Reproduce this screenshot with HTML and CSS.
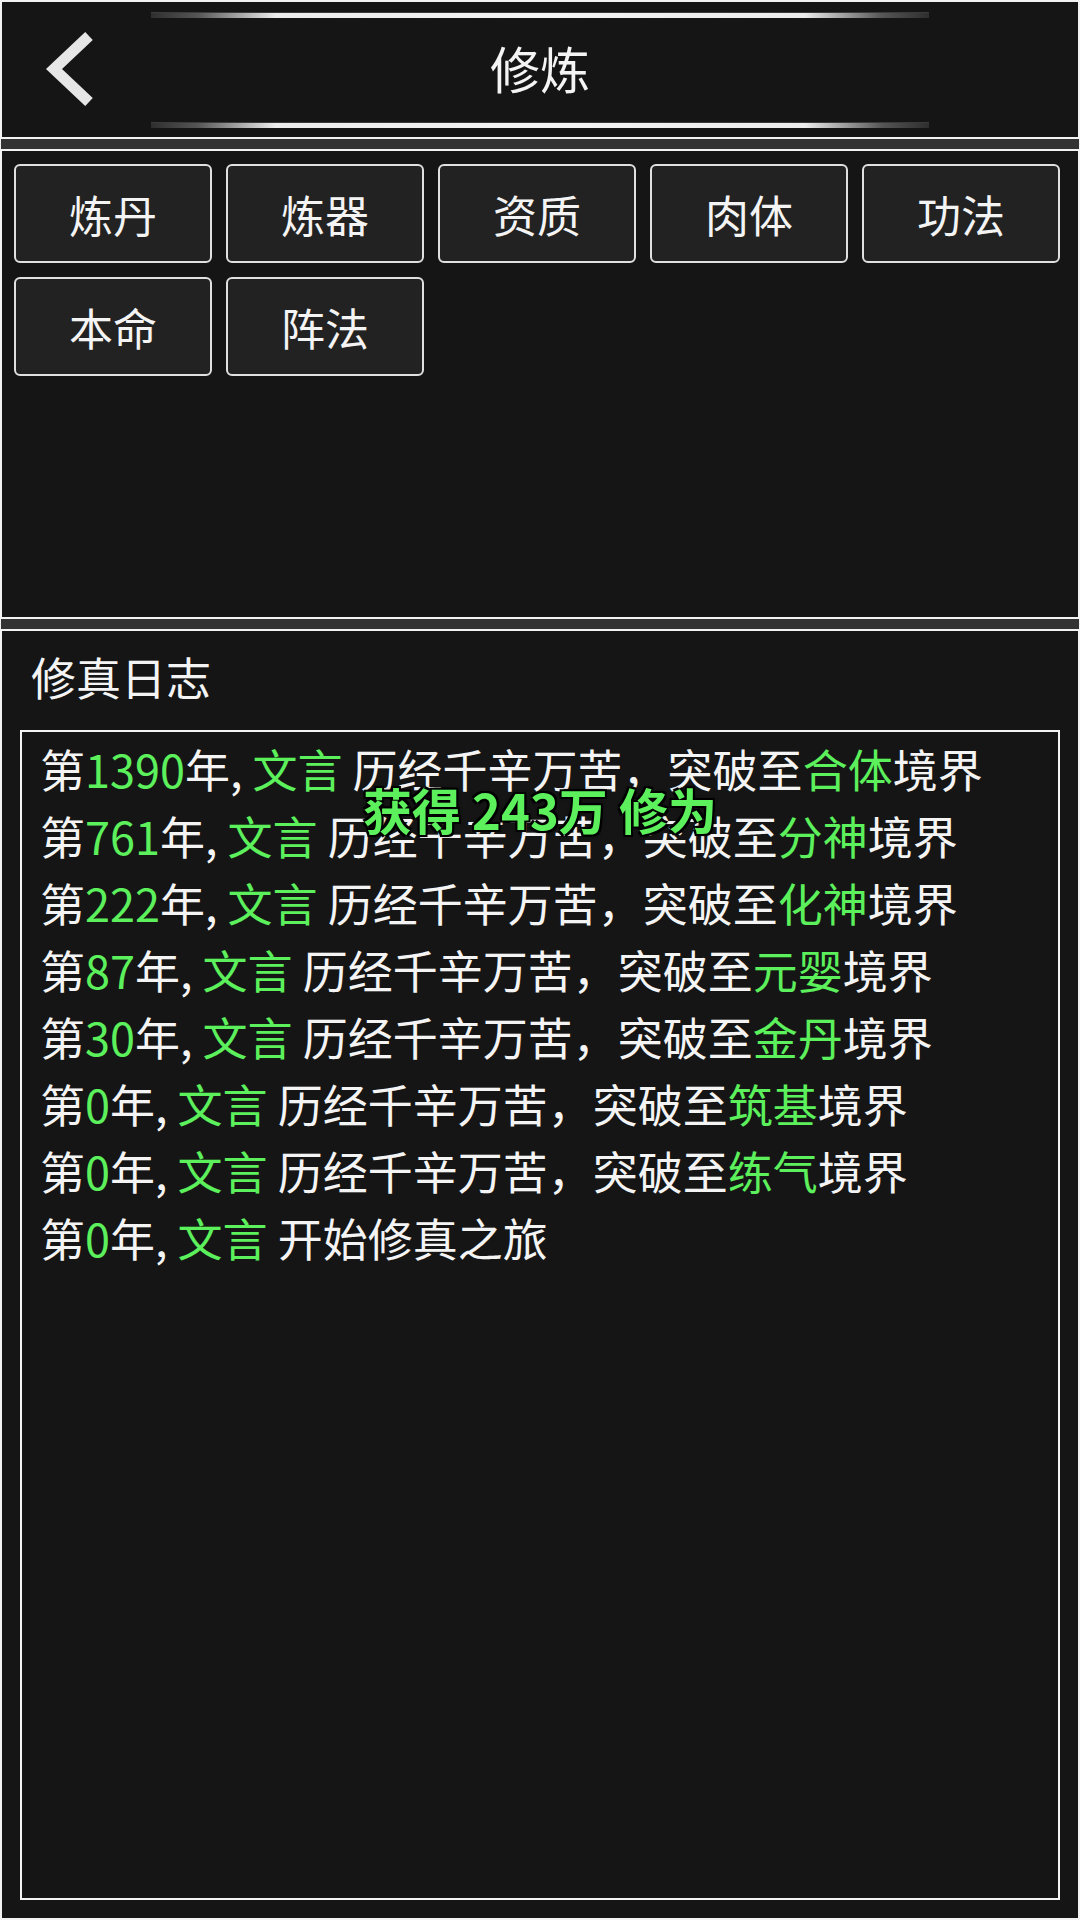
FILE: index.html
```html
<!DOCTYPE html>
<html lang="zh-CN">
<head>
  <meta charset="UTF-8" />
  <title>修炼</title>
  <link rel="stylesheet" href="styles.css">
</head>
<body>
  <!-- 顶部标题栏 -->
  <div class="header">
    <div class="back">
      <svg width="149" height="135" viewBox="0 0 149 135">
        <polyline points="87,34 52,67 87,100" fill="none" stroke="#e6e6e6" stroke-width="11" stroke-linejoin="miter" stroke-linecap="butt" />
      </svg>
    </div>
    <div class="title-box">
      <div class="title-line"></div>
      <div class="title">修炼</div>
      <div class="title-line"></div>
    </div>
    <div></div>
  </div>

  <div class="divider"></div>

  <!-- 修炼选项 -->
  <div class="panel tabs">
    <button class="tab">炼丹</button>
    <button class="tab">炼器</button>
    <button class="tab">资质</button>
    <button class="tab">肉体</button>
    <button class="tab">功法</button>
    <button class="tab">本命</button>
    <button class="tab">阵法</button>
  </div>

  <div class="divider"></div>

  <!-- 修真日志 -->
  <div class="panel log-panel">
    <div class="log-title">修真日志</div>
    <div class="log">
      <div class="line">第<span class="hl">1390</span>年, <span class="hl">文言</span> 历经千辛万苦，突破至<span class="hl">合体</span>境界</div>
      <div class="line">第<span class="hl">761</span>年, <span class="hl">文言</span> 历经千辛万苦，突破至<span class="hl">分神</span>境界</div>
      <div class="line">第<span class="hl">222</span>年, <span class="hl">文言</span> 历经千辛万苦，突破至<span class="hl">化神</span>境界</div>
      <div class="line">第<span class="hl">87</span>年, <span class="hl">文言</span> 历经千辛万苦，突破至<span class="hl">元婴</span>境界</div>
      <div class="line">第<span class="hl">30</span>年, <span class="hl">文言</span> 历经千辛万苦，突破至<span class="hl">金丹</span>境界</div>
      <div class="line">第<span class="hl">0</span>年, <span class="hl">文言</span> 历经千辛万苦，突破至<span class="hl">筑基</span>境界</div>
      <div class="line">第<span class="hl">0</span>年, <span class="hl">文言</span> 历经千辛万苦，突破至<span class="hl">练气</span>境界</div>
      <div class="line">第<span class="hl">0</span>年, <span class="hl">文言</span> 开始修真之旅</div>

      <!-- 获得修为提示 -->
      <div class="toast">获得 243万 修为</div>
    </div>
  </div>
</body>
</html>
```

FILE: styles.css
```css
    html, body {
      margin: 0;
      height: 100%;
    }
    body {
      font-family: "Noto Sans CJK SC", "Noto Sans", sans-serif;
      background: #f2f2f2;
      padding: 2px;
      box-sizing: border-box;
      display: flex;
      flex-direction: column;
      color: #f4f4f4;
    }

    .header {
      height: 135px;
      flex: none;
      background: #151515;
      display: grid;
      grid-template-columns: 149px 1fr 149px;
    }
    .back svg {
      display: block;
    }
    .title-box {
      display: flex;
      flex-direction: column;
      padding: 10px 0 9px;
    }
    .title-line {
      height: 5px;
      background: linear-gradient(to right, #2e2e2e 0%, #555 6%, #ececec 16%, #f4f4f4 50%, #ececec 84%, #555 94%, #2e2e2e 100%);
      border-top: 1px solid #3a3a3a;
    }
    .title {
      flex: 1;
      display: flex;
      align-items: center;
      justify-content: center;
      font-size: 50px;
      padding-bottom: 6px;
    }

    .divider {
      flex: none;
      height: 10px;
      background: #333;
      margin: 2px -1px;
    }

    .panel {
      background: #151515;
    }

    .tabs {
      height: 466px;
      flex: none;
      box-sizing: border-box;
      padding: 13px 12px 12px;
      display: flex;
      flex-wrap: wrap;
      align-content: flex-start;
      gap: 14px;
    }
    .tab {
      width: 198px;
      height: 99px;
      background: #222;
      border: 2px solid #e0e0e0;
      border-radius: 6px;
      color: #f4f4f4;
      font-family: inherit;
      font-size: 44px;
      padding: 0;
      cursor: pointer;
    }

    .log-panel {
      flex: 1;
      display: flex;
      flex-direction: column;
      padding: 13px 18px 18px;
      min-height: 0;
    }
    .log-title {
      font-size: 45px;
      line-height: 66px;
      margin: 0 0 20px 11px;
    }
    .log {
      flex: 1;
      position: relative;
      border: 2px solid #f4f4f4;
      padding: 3px 18px;
    }
    .line {
      font-size: 45px;
      line-height: 67px;
      white-space: nowrap;
    }
    .hl {
      color: #5cf05c;
    }

    .toast {
      position: absolute;
      left: 0;
      right: 0;
      top: 47px;
      text-align: center;
      font-size: 49px;
      font-weight: bold;
      line-height: 60px;
      color: #5cf05c;
      text-shadow: -2px -2px 0 #000, 2px -2px 0 #000, -2px 2px 0 #000, 2px 2px 0 #000, 0 0 4px #000;
    }
```
